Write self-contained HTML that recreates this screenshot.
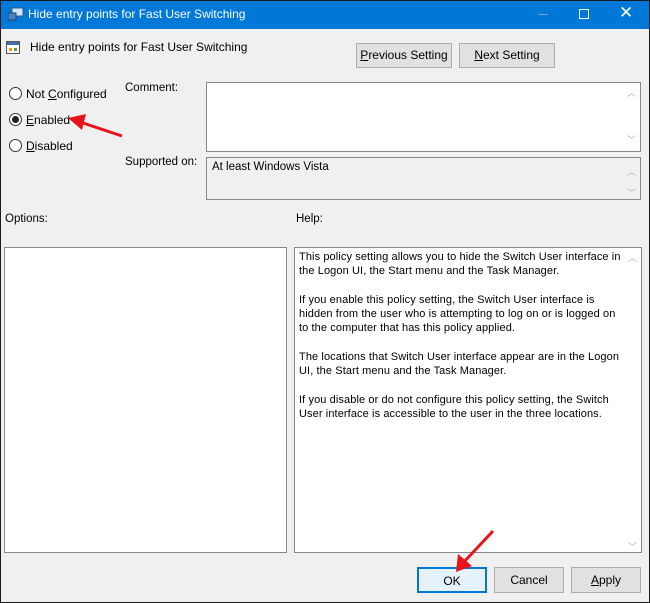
<!DOCTYPE html>
<html><head><style>
*{margin:0;padding:0;box-sizing:border-box}
body{width:650px;height:603px;overflow:hidden;background:#f0f0f0;font-family:"Liberation Sans",sans-serif;font-size:11.5px;color:#000;position:relative}
.a{position:absolute;white-space:nowrap}
.frame{position:absolute;left:0;top:0;width:650px;height:603px;border:1px solid #1a1a1a;pointer-events:none}
.title{position:absolute;left:0;top:0;width:650px;height:29px;background:#0078d7;color:#fff}
.btn{position:absolute;background:#e1e1e1;border:1px solid #adadad;text-align:center;font-size:12px}
.box{position:absolute;background:#fff;border:1px solid #828790}
.sb{position:absolute;right:0;top:0;bottom:0;width:17px;color:#b0b0b0;font-size:9px;text-align:center}
.radio{position:absolute;width:13px;height:13px;border:1px solid #333;border-radius:50%;background:#fff}
.help{position:absolute;left:299px;top:250px;font-size:11px;line-height:14.3px;letter-spacing:0.1px;white-space:nowrap}
u{text-decoration:underline}
</style></head><body>
<div class="title">
<svg class="a" style="left:8px;top:7px" width="16" height="14"><rect x="4" y="1" width="11" height="8" fill="#d0e4f4" stroke="#3a5a80"/><rect x="0" y="6" width="8" height="7" fill="#4a7fc0" stroke="#20406a"/></svg>
<div class="a" style="left:28px;top:7px;font-size:12px">Hide entry points for Fast User Switching</div>
<div class="a" style="left:538px;top:14px;width:10px;height:1px;background:#6ea7e0"></div>
<div class="a" style="left:579px;top:9px;width:10px;height:10px;border:1px solid #fff"></div>
<div class="a" style="left:619px;top:3px;font-size:17px">✕</div>
</div>
<svg class="a" style="left:6px;top:41px" width="14" height="13"><rect x="0.5" y="0.5" width="13" height="12" fill="#fff" stroke="#555"/><rect x="1" y="1" width="12" height="3" fill="#3d6fa8"/><rect x="3" y="7" width="3" height="3" fill="#e0a020"/><rect x="8" y="7" width="3" height="3" fill="#5a9a4a"/></svg>
<div class="a" style="left:30px;top:40px;font-size:12px">Hide entry points for Fast User Switching</div>
<div class="btn" style="left:356px;top:43px;width:96px;height:25px;line-height:23px"><u>P</u>revious Setting</div>
<div class="btn" style="left:459px;top:43px;width:96px;height:25px;line-height:23px"><u>N</u>ext Setting</div>

<div class="radio" style="left:9px;top:87px"></div>
<div class="a" style="left:26px;top:87px;font-size:12px">Not <u>C</u>onfigured</div>
<div class="radio" style="left:9px;top:113px"><div style="position:absolute;left:2px;top:2px;width:7px;height:7px;border-radius:50%;background:#222"></div></div>
<div class="a" style="left:26px;top:113px;font-size:12px"><u>E</u>nabled</div>
<div class="radio" style="left:9px;top:139px"></div>
<div class="a" style="left:26px;top:139px;font-size:12px"><u>D</u>isabled</div>

<div class="a" style="left:125px;top:82px">Comment:</div>
<div class="box" style="left:206px;top:82px;width:435px;height:70px"><div class="sb"><div style="margin-top:3px">︿</div><div style="margin-top:34px">﹀</div></div></div>
<div class="a" style="left:125px;top:156px">Supported on:</div>
<div class="box" style="left:206px;top:157px;width:435px;height:43px;background:#f0f0f0"><div class="a" style="left:5px;top:3px">At least Windows Vista</div><div class="sb"><div style="margin-top:7px">︿</div><div style="margin-top:8px">﹀</div></div></div>

<div class="a" style="left:5px;top:213px">Options:</div>
<div class="a" style="left:296px;top:213px">Help:</div>
<div class="box" style="left:4px;top:247px;width:283px;height:306px"></div>
<div class="box" style="left:294px;top:247px;width:348px;height:306px"><div class="sb"><div style="margin-top:3px">︿</div><div style="margin-top:276px">﹀</div></div></div>
<div class="help">This policy setting allows you to hide the Switch User interface in<br>the Logon UI, the Start menu and the Task Manager.<br><br>If you enable this policy setting, the Switch User interface is<br>hidden from the user who is attempting to log on or is logged on<br>to the computer that has this policy applied.<br><br>The locations that Switch User interface appear are in the Logon<br>UI, the Start menu and the Task Manager.<br><br>If you disable or do not configure this policy setting, the Switch<br>User interface is accessible to the user in the three locations.</div>

<div class="btn" style="left:417px;top:567px;width:70px;height:26px;line-height:24px;border:2px solid #0078d7;background:#e5f1fb">OK</div>
<div class="btn" style="left:494px;top:567px;width:70px;height:26px;line-height:24px">Cancel</div>
<div class="btn" style="left:571px;top:567px;width:70px;height:26px;line-height:24px"><u>A</u>pply</div>

<svg class="a" style="left:0;top:0" width="650" height="603">
<line x1="122" y1="136" x2="80" y2="122" stroke="#e8141c" stroke-width="3"/>
<polygon points="68,118 86,114 82,130" fill="#e8141c"/>
<line x1="493" y1="531" x2="463" y2="563" stroke="#e8141c" stroke-width="3"/>
<polygon points="456,572 458,554 472,566" fill="#e8141c"/>
</svg>
<div class="frame"></div>
</body></html>
